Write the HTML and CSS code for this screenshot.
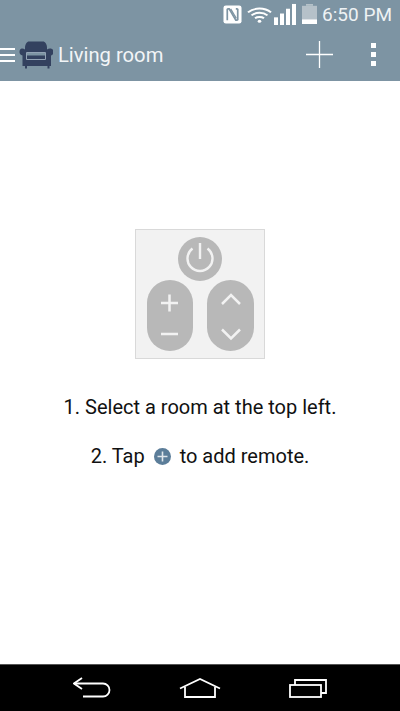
FILE: index.html
```html
<!DOCTYPE html>
<html lang="en">
<head>
  <meta charset="UTF-8">
  <meta name="viewport" content="width=device-width, initial-scale=1.0">
  <title>Living room</title>
  <link rel="stylesheet" href="styles.css">
</head>
<body>
  <div class="phone">
    <header class="app-header">
      <div class="status-bar">
        <!-- nfc -->
        <svg class="nfc" width="19" height="19" viewBox="0 0 20 20">
          <rect x="0.5" y="0.5" width="19" height="19" rx="2.5" fill="#fff"/>
          <path d="M4.5 4v12M4.5 4h2l7 12h2M15.5 16V4M15.5 4h-2" fill="none" stroke="#7d94a3" stroke-width="1.8"/>
          <path d="M8 4l6 10" stroke="#7d94a3" stroke-width="1.4"/>
        </svg>
        <!-- wifi -->
        <svg class="wifi" width="25" height="17" viewBox="0 0 25 20" preserveAspectRatio="none">
          <path d="M1 7.500C7.500 1.500 17.500 1.500 24 7.500M4.500 11C9 7 16 7 20.500 11M8 14.500C10.500 12.500 14.500 12.500 17 14.500" fill="none" stroke="#fff" stroke-width="2.200"/>
          <circle cx="12.500" cy="18" r="1.800" fill="#fff"/>
        </svg>
        <!-- signal -->
        <svg class="signal" width="23" height="22" viewBox="0 0 23 23" preserveAspectRatio="none">
          <rect x="0" y="15" width="4" height="8" fill="#fff"/>
          <rect x="6" y="11" width="4" height="12" fill="#fff"/>
          <rect x="12" y="6" width="4" height="17" fill="#fff"/>
          <rect x="18" y="1" width="4" height="22" fill="#fff"/>
        </svg>
        <!-- battery -->
        <svg class="battery" width="15" height="20" viewBox="0 0 15 22" preserveAspectRatio="none">
          <rect x="4" y="0" width="7" height="2" fill="#b5c1c9"/>
          <rect x="0" y="2" width="15" height="20" fill="#b5c1c9"/>
          <rect x="0" y="17" width="15" height="5" fill="#fff"/>
        </svg>
        <span class="clock">6:50 PM</span>
      </div>
      <div class="toolbar">
        <div class="room">
          <svg class="menu-icon" width="15" height="16" viewBox="0 0 15 16">
            <path d="M0 2h15M0 8h15M0 14h15" stroke="#fff" stroke-width="2"/>
          </svg>
          <svg class="sofa" width="34" height="28" viewBox="0 0 34 28">
            <path d="M6 7C6 3 8 .5 10 .5h14c2 0 4 2.500 4 6.500v5H6z" fill="#33415f"/>
            <path d="M3 7.500c2.500 0 4 1.500 4 3.500v3.500h20V11c0-2 1.500-3.500 4-3.500s3.500 1.500 3.500 3.500-1 3-2.500 3.500V25h-1.500v2.500h-2V25H8v2.500H6V25H3.500V14.500C1.500 14 .5 13 .5 11s1-3.500 2.500-3.500z" fill="#33415f"/>
            <path d="M7.500 11.500V18.500H26.500V11.500H7.500" fill="none" stroke="#93a3b5" stroke-width="1"/>
          </svg>
          <span class="room-name">Living room</span>
        </div>
        <div class="actions">
          <svg class="add-icon" width="27" height="27" viewBox="0 0 27 27">
            <path d="M0 13.500h27M13.500 0v27" stroke="#fff" stroke-width="1.300"/>
          </svg>
          <div class="more">
            <span class="dot"></span>
            <span class="dot"></span>
            <span class="dot"></span>
          </div>
        </div>
      </div>
    </header>

    <main class="guide">
      <svg class="remote" width="130" height="130" viewBox="0 0 130 130">
        <rect x="0.500" y="0.500" width="129" height="129" fill="#f2f2f2" stroke="#d9d9d9"/>
        <circle cx="65" cy="30" r="22" fill="#b8b8b8"/>
        <path d="M57.500 19.500a12.500 12.500 0 1 0 15 0" fill="none" stroke="#f2f2f2" stroke-width="2.400"/>
        <path d="M65 14v16" stroke="#f2f2f2" stroke-width="2.400"/>
        <rect x="12" y="51" width="46" height="71" rx="23" fill="#b8b8b8"/>
        <rect x="72" y="51" width="47" height="71" rx="23.500" fill="#b8b8b8"/>
        <path d="M26 74h17M34.500 65.500v17M26 105h17" stroke="#f2f2f2" stroke-width="2.500" fill="none"/>
        <path d="M87 75l9-9 9 9M87 100.500l9 9 9-9" stroke="#f2f2f2" stroke-width="2.500" fill="none"/>
      </svg>
      <p class="step step-first">1. Select a room at the top left.</p>
      <p class="step">2. Tap
        <svg class="plus-badge" width="17" height="17" viewBox="0 0 17 17">
          <circle cx="8.500" cy="8.500" r="8.500" fill="#5b7d99"/>
          <path d="M3.500 8.500h10M8.500 3.500v10" stroke="#dfe6ec" stroke-width="1.600"/>
        </svg>
        to add remote.</p>
    </main>

    <nav class="nav-bar">
      <svg width="38" height="22" viewBox="0 0 38 22">
        <path d="M9 1L1 6.500l8 5.500" fill="none" stroke="#fff" stroke-width="1.800"/>
        <path d="M1 6.500h29a6.500 6.500 0 0 1 0 13H10" fill="none" stroke="#fff" stroke-width="1.800"/>
      </svg>
      <svg width="42" height="20" viewBox="0 0 42 20">
        <path d="M1 10.500L21 1l20 9.500" fill="none" stroke="#fff" stroke-width="1.800"/>
        <path d="M6 9v10h30V9" fill="none" stroke="#fff" stroke-width="1.800"/>
      </svg>
      <svg width="38" height="19" viewBox="0 0 38 19">
        <rect x="1" y="6" width="31" height="12" fill="none" stroke="#fff" stroke-width="1.800"/>
        <path d="M6 6V1h31v13h-5" fill="none" stroke="#fff" stroke-width="1.800"/>
      </svg>
    </nav>
  </div>
</body>
</html>
```

FILE: styles.css
```css
* {
  box-sizing: border-box;
}

body {
  margin: 0;
  font-family: Roboto, "Liberation Sans", sans-serif;
  background: #fff;
}

.phone {
  display: flex;
  flex-direction: column;
  height: 711px;
  overflow: hidden;
}

.app-header {
  height: 81px;
  background: #7d94a3;
  color: #fff;
}

.status-bar {
  display: flex;
  align-items: center;
  justify-content: flex-end;
  height: 28px;
  padding-right: 8px;
}

.wifi {
  margin-left: 5px;
}

.signal {
  margin-left: 2px;
}

.battery {
  margin-left: 5px;
}

.clock {
  margin-left: 5px;
  font-size: 19px;
  color: #eef2f4;
}

.toolbar {
  display: flex;
  align-items: center;
  justify-content: space-between;
  height: 53px;
}

.room {
  display: flex;
  align-items: center;
}

.sofa {
  margin-left: 4px;
}

.room-name {
  margin-left: 5px;
  font-size: 20.2px;
  color: #f2f5f7;
}

.actions {
  display: flex;
  align-items: center;
  padding-right: 24px;
}

.more {
  display: flex;
  flex-direction: column;
  gap: 4px;
  margin-left: 38px;
}

.dot {
  width: 5px;
  height: 5px;
  background: #fff;
}

.guide {
  flex: 1;
  display: flex;
  flex-direction: column;
  align-items: center;
  padding-top: 148px;
}

.remote {
  display: block;
}

.step {
  margin: 27px 0 0;
  height: 22px;
  font-size: 20px;
  line-height: 22px;
  color: #111;
  text-align: center;
}

.step-first {
  margin-top: 37px;
}

.plus-badge {
  margin: 0 4px;
  vertical-align: -2px;
}

.nav-bar {
  display: flex;
  align-items: center;
  justify-content: center;
  gap: 68px;
  height: 47px;
  background: #000;
  border-top: 1px solid #555;
}
```
